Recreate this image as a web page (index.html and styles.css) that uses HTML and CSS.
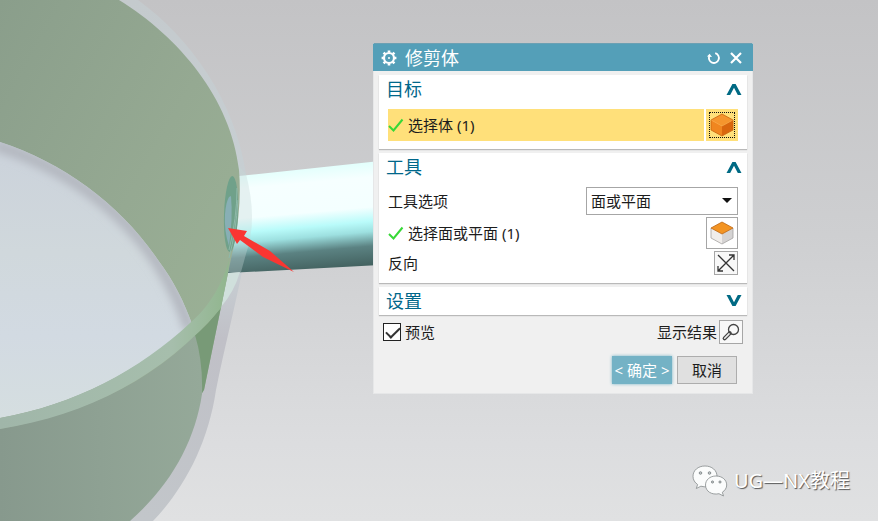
FILE: index.html
```html
<!DOCTYPE html>
<html lang="zh-CN">
<head>
  <meta charset="UTF-8">
  <title>修剪体</title>
  <link rel="stylesheet" href="styles.css">
</head>
<body>

  <!-- 三维视图 -->
  <svg class="viewport" viewBox="0 0 878 521" preserveAspectRatio="xMinYMin slice" aria-hidden="true">
    <defs>
      <linearGradient id="wall" x1="0" y1="0" x2="1" y2="1">
        <stop offset="0" stop-color="#8a9e8b"/>
        <stop offset="0.5" stop-color="#95a992"/>
        <stop offset="1" stop-color="#9db497"/>
      </linearGradient>
      <linearGradient id="front" x1="0" y1="0" x2="1" y2="0">
        <stop offset="0" stop-color="#87998d"/>
        <stop offset="1" stop-color="#95a999"/>
      </linearGradient>
      <linearGradient id="hole" x1="0" y1="0" x2="0" y2="1">
        <stop offset="0" stop-color="#cbd2db"/>
        <stop offset="0.4" stop-color="#d0d8dc"/>
        <stop offset="0.7" stop-color="#d2dae2"/>
        <stop offset="1" stop-color="#d5dee0"/>
      </linearGradient>
      <linearGradient id="rim" x1="0" y1="0" x2="1" y2="0">
        <stop offset="0" stop-color="#a0b6a9"/>
        <stop offset="0.75" stop-color="#a6beac"/>
        <stop offset="1" stop-color="#91b68e"/>
      </linearGradient>
      <linearGradient id="outer" x1="0" y1="0" x2="0" y2="1">
        <stop offset="0" stop-color="#c4cacd"/>
        <stop offset="0.5" stop-color="#c9d1d5"/>
        <stop offset="0.65" stop-color="#c0c0c7"/>
        <stop offset="1" stop-color="#c2c6ca"/>
      </linearGradient>
      <linearGradient id="tube" gradientUnits="userSpaceOnUse" x1="300" y1="168" x2="309" y2="270">
        <stop offset="0" stop-color="#e2fffc"/>
        <stop offset="0.15" stop-color="#f6ffff"/>
        <stop offset="0.44" stop-color="#f4ffff"/>
        <stop offset="0.58" stop-color="#b9fbfa"/>
        <stop offset="0.68" stop-color="#9de0e0"/>
        <stop offset="0.82" stop-color="#5b8282"/>
        <stop offset="1" stop-color="#446361"/>
      </linearGradient>
      <filter id="soft" x="-20%" y="-20%" width="140%" height="140%">
        <feGaussianBlur stdDeviation="4"/>
      </filter>
      <clipPath id="holeClip">
        <path d="M0 142C64 163 121 205 158 260C174 281 184 302 192 324C140 370 74 405 0 418Z"/>
      </clipPath>
    </defs>

    <path fill="url(#outer)" d="M0 0H138C190 38 235 100 246 174L242 272C233 315 224 350 216 390C208 445 183 490 153 521H0Z"/>
    <path fill="url(#tube)" d="M239 176L380 161V265L228 273Z"/>
    <path fill="#c5d8d8" opacity="0.35" d="M238 165L246 174Q258 220 246 254L241 272H228Z"/>
    <path fill="#d0e0dc" d="M228 273L240 272Q234 292 221 307Z"/>
    <path fill="url(#wall)" d="M0 0H119C179 37 231 99 239 170Q242 205 234 245L228 273L204 390L0 430Z"/>

    <!-- 内孔 -->
    <path fill="url(#hole)" d="M0 142C64 163 121 205 158 260C174 281 184 302 192 324C140 370 74 405 0 418Z"/>
    <g clip-path="url(#holeClip)">
      <path d="M-5 145C64 166 121 208 158 263C172 285 184 310 190 330" fill="none" stroke="#b3b7bf" stroke-width="12" filter="url(#soft)"/>
    </g>

    <path fill="#789a77" d="M194 336Q209 324 221 307L204 390L198 400Z"/>
    <path fill="url(#front)" d="M0 429C82 414 148 383 195 335Q203 361 202 394C195 441 171 485 130 521H0Z"/>
    <path fill="url(#rim)" d="M0 418C74 405 140 370 190 323C207 309 222 286 229 260L228 273L221 308C163 376 88 415 0 429Z"/>

    <!-- 管口 -->
    <ellipse cx="231" cy="214" rx="7" ry="38" fill="#70a18a" transform="rotate(2 231 214)"/>
    <path fill="#88afb5" d="M229 197Q226 202 225 214Q224 231 229 246Q233 218 231 196Z"/>
    <path fill="none" stroke="#8fb9aa" d="M237 188Q237 218 229 250M238 200Q236 232 229 258"/>
    <path fill="#f93632" d="M228 228L247 231L244 236L270 251L294 272L263 257L240 240L237 244Z"/>
  </svg>

  <!-- 修剪体对话框 -->
  <form class="dialog">
    <header class="titlebar">
      <svg class="icon-gear" viewBox="0 0 16 16" aria-hidden="true">
        <g fill="none" stroke="#fff">
          <circle cx="8" cy="8" r="5" stroke-width="2.2"/>
          <path stroke-width="2.6" d="M8 .6v2M8 13.4v2M.6 8h2M13.4 8h2M2.6 2.6l1.5 1.5M11.9 11.9l1.5 1.5M2.6 13.4l1.5-1.5M11.9 4.1l1.5-1.5"/>
        </g>
        <circle cx="8" cy="8" r="1" fill="#fff"/>
      </svg>
      <h1>修剪体</h1>
      <button type="button" class="title-btn" aria-label="重置">
        <svg viewBox="0 0 14 14"><path d="M7 2A5 5 0 1 1 2 6" fill="none" stroke="#fff" stroke-width="1.8" transform="rotate(14 7 7)"/><path d="M0 5.5L2.6 2.8L5 6Z" fill="#fff"/></svg>
      </button>
      <button type="button" class="title-btn" aria-label="关闭">
        <svg viewBox="0 0 14 14"><path d="M2 2L12 12M12 2L2 12" fill="none" stroke="#fff" stroke-width="2.2"/></svg>
      </button>
    </header>

    <div class="groups">
      <section class="group">
        <div class="group-head">
          <h2>目标</h2>
          <button type="button" class="fold" aria-label="折叠目标">
            <svg viewBox="0 0 16 14"><path d="M0.5 13L6.4 2H9.6L15.5 13H11.8L8 5.8L4.2 13Z"/></svg>
          </button>
        </div>
        <div class="row selected">
          <span class="field"><svg class="check" viewBox="0 0 16 16" aria-hidden="true"><path d="M1 9L5.5 13.5L14.5 2.5"/></svg>选择体 (1)</span>
          <button type="button" class="pick pick-active" aria-label="选择体">
            <svg viewBox="0 0 24 24">
              <path fill="#f5952d" d="M12 1L23 7L12 13L1 7Z"/>
              <path fill="#f0861f" d="M1 7L12 13V23L1 17Z"/>
              <path fill="#d9660d" d="M23 7L12 13V23L23 17Z"/>
              <path fill="none" stroke="#c8650f" stroke-width="0.8" d="M12 1L23 7V17L12 23L1 17V7Z"/>
              <path fill="none" stroke="#f9a648" stroke-width="0.6" d="M1.5 7.3L12 13L22.5 7.3"/>
            </svg>
          </button>
        </div>
      </section>

      <section class="group">
        <div class="group-head">
          <h2>工具</h2>
          <button type="button" class="fold" aria-label="折叠工具">
            <svg viewBox="0 0 16 14"><path d="M0.5 13L6.4 2H9.6L15.5 13H11.8L8 5.8L4.2 13Z"/></svg>
          </button>
        </div>
        <div class="row">
          <label for="toolOption">工具选项</label>
          <span class="select-box">
            <select id="toolOption">
              <option>面或平面</option>
              <option>新建平面</option>
            </select>
          </span>
        </div>
        <div class="row">
          <span class="field"><svg class="check" viewBox="0 0 16 16" aria-hidden="true"><path d="M1 9L5.5 13.5L14.5 2.5"/></svg>选择面或平面 (1)</span>
          <button type="button" class="pick" aria-label="选择面或平面">
            <svg viewBox="0 0 24 24">
              <path fill="#f0edeb" d="M1 7L12 13V23L1 17Z"/>
              <path fill="#d5d3d3" d="M23 7L12 13V23L23 17Z"/>
              <path fill="none" stroke="#a4a2a1" stroke-width="0.8" d="M23 7V17L12 23L1 17V7"/>
              <path fill="#f39423" stroke="#bd6411" stroke-width="0.8" d="M12 1L23 7L12 13L1 7Z"/>
            </svg>
          </button>
        </div>
        <div class="row">
          <span>反向</span>
          <button type="button" class="small-btn" aria-label="反向">
            <svg viewBox="0 0 20 20"><path d="M2 18L18 2M13 2H18V7M2 13V18H7M2 2L18 18" fill="none" stroke="#333" stroke-width="1.3"/></svg>
          </button>
        </div>
      </section>

      <section class="group folded">
        <div class="group-head">
          <h2>设置</h2>
          <button type="button" class="fold" aria-label="展开设置">
            <svg viewBox="0 0 16 14"><path d="M0.5 1L6.4 12H9.6L15.5 1H11.8L8 8.2L4.2 1Z"/></svg>
          </button>
        </div>
      </section>
    </div>

    <div class="preview">
      <label class="preview-check"><input type="checkbox" checked>预览</label>
      <span class="result">显示结果</span>
      <button type="button" class="small-btn" aria-label="显示结果">
        <svg viewBox="0 0 20 20"><circle cx="12.5" cy="7.5" r="5" fill="none" stroke="#444" stroke-width="1.3"/><path d="M8.8 11.1L3.6 16.3" stroke="#444" stroke-width="4" stroke-linecap="round"/><path d="M8 11.9L3.7 16.2" stroke="#eee" stroke-width="1.6" stroke-linecap="round"/></svg>
      </button>
    </div>

    <footer class="actions">
      <button type="button" class="btn btn-ok">&lt; 确定 &gt;</button>
      <button type="button" class="btn">取消</button>
    </footer>
  </form>

  <!-- 公众号水印 -->
  <div class="watermark">
    <svg viewBox="0 0 36 32" aria-hidden="true">
      <g fill="#fbfcfc" stroke="#858a8c" stroke-width="0.8">
        <path d="M13 1C6 1 1 5.4 1 11.3C1 14.8 2.8 17.6 5.6 19.5L4.3 23.5L8.9 21.2C18 23.8 25 18 25 11.3C25 5.4 20 1 13 1Z"/>
        <path d="M24 11C17.8 11 13.5 15 13.5 20C13.5 26.2 19.6 30.3 27 28.7L31.5 31L30.3 27.3C33 25.5 34.7 23 34.7 20C34.7 15 30.2 11 24 11Z"/>
      </g>
      <g fill="#c2c8c9" stroke="#777d80" stroke-width="0.8">
        <circle cx="8.5" cy="8" r="1.3"/><circle cx="17.5" cy="8" r="1.3"/>
        <circle cx="20.5" cy="17" r="1.1"/><circle cx="28" cy="17" r="1.1"/>
      </g>
    </svg>
    <span>UG—NX教程</span>
  </div>

</body>
</html>
```
FILE: styles.css
```css
/* 基本样式 */
* {
  box-sizing: border-box;
}
body {
  margin: 0;
  min-height: 100vh;
  position: relative;
  overflow: hidden;
  font-family: "Noto Sans", "Noto Sans CJK SC", sans-serif;
  font-size: 15px;
  line-height: 20px;
  color: #1c1c1c;
  background: linear-gradient(#c3c3c5, #cecfd1 45%, #dcdddf 85%, #e0e1e2);
}
button {
  padding: 0;
  border: 0;
  background: none;
  font: inherit;
  color: inherit;
  cursor: pointer;
}
svg {
  display: block;
}
h1,
h2 {
  margin: 0;
  font-size: 18px;
  font-weight: 400;
  line-height: 24px;
}
.viewport {
  position: absolute;
  left: 0;
  top: 0;
  width: 100%;
  height: 100%;
}

/* 对话框 */
.dialog {
  position: absolute;
  left: 373px;
  top: 43px;
  width: 380px;
  background: #f0f0f0;
  border: 1px solid #e6e7e8;
  border-top-color: #6ba0b3;
}
.titlebar {
  display: flex;
  align-items: center;
  gap: 8px;
  height: 27px;
  margin: 0 -1px;
  padding: 0 10px 0 8px;
  background: #549fb8;
  color: #fff;
}
.titlebar h1 {
  flex: 1;
}
.icon-gear {
  width: 16px;
  height: 16px;
}
.title-btn svg {
  width: 14px;
  height: 14px;
}

/* 分组 */
.groups {
  display: flex;
  flex-direction: column;
  gap: 4px;
  padding: 4px 5px 0;
}
.group {
  padding: 0 9px 8px;
  background: #fff;
  box-shadow: 0 1px 1px #b9b9b9;
}
.folded {
  padding-bottom: 0;
}
.group-head {
  display: flex;
  align-items: center;
  justify-content: space-between;
  height: 28px;
  color: #00678a;
}
.group:not(.folded) .group-head {
  margin-bottom: 6px;
}
.group-head h2 {
  margin-left: -2px;
}
.fold {
  margin-right: -4px;
}
.fold svg {
  width: 16px;
  height: 14px;
  fill: #006a84;
}
.row {
  display: flex;
  align-items: center;
  justify-content: space-between;
  margin-top: 2px;
}
.field {
  flex: 1;
  display: flex;
  align-items: center;
  align-self: stretch;
  gap: 4px;
}
.selected {
  gap: 2px;
}
.selected .field {
  background: #ffe07a;
}
.check {
  width: 16px;
  height: 16px;
  fill: none;
  stroke: #37d837;
  stroke-width: 2;
}
.pick {
  display: flex;
  align-items: center;
  justify-content: center;
  width: 32px;
  height: 32px;
  border: 1px solid #a6a6a6;
  background: #fff;
}
.pick svg {
  width: 24px;
  height: 24px;
}
.pick-active {
  border: 3px solid #ffe07a;
  background: #ffe07a;
  outline: 1px dotted #111;
  outline-offset: -4px;
}
.small-btn {
  display: flex;
  align-items: center;
  justify-content: center;
  width: 24px;
  height: 24px;
  border: 1px solid #a6a6a6;
  background: #f8f8f8;
}
.small-btn svg {
  width: 20px;
  height: 20px;
}
.select-box {
  position: relative;
  width: 152px;
}
.select-box::after {
  content: "";
  position: absolute;
  right: 6px;
  top: 11px;
  border: 5px solid transparent;
  border-top-color: #111;
  border-bottom: 0;
  pointer-events: none;
}
select {
  display: block;
  width: 100%;
  height: 28px;
  padding: 0 4px;
  appearance: none;
  border: 1px solid #a6a6a6;
  border-radius: 0;
  background: #fff;
  font: inherit;
  color: inherit;
}

/* 底部 */
.preview {
  display: flex;
  align-items: center;
  gap: 2px;
  padding: 5px 9px 0;
}
.preview-check {
  flex: 1;
  display: flex;
  align-items: center;
  gap: 4px;
}
.preview-check input {
  appearance: none;
  width: 18px;
  height: 18px;
  margin: 0;
  border: 1px solid #222;
  background: #fff;
}
.preview-check input:checked::before {
  content: "";
  display: block;
  width: 12px;
  height: 6px;
  margin: 3px 2px;
  border: solid #333;
  border-width: 0 0 2px 2px;
  transform: rotate(-45deg);
}
.actions {
  display: flex;
  justify-content: flex-end;
  gap: 5px;
  padding: 12px 15px 9px;
}
.btn {
  width: 60px;
  height: 28px;
  border: 1px solid #adadad;
  background: #e0e0e0;
  white-space: nowrap;
}
.btn-ok {
  border-color: #74b2c5;
  background: #74b2c5;
  box-shadow: 0 0 3px #74b2c5;
  color: #fff;
}

/* 水印 */
.watermark {
  position: absolute;
  right: 28px;
  bottom: 24px;
  display: flex;
  align-items: center;
  gap: 6px;
  font-size: 20px;
  line-height: 32px;
  color: #fff;
  text-shadow: 1px 1px 1px #555;
}
.watermark svg {
  width: 36px;
  height: 32px;
}
```
